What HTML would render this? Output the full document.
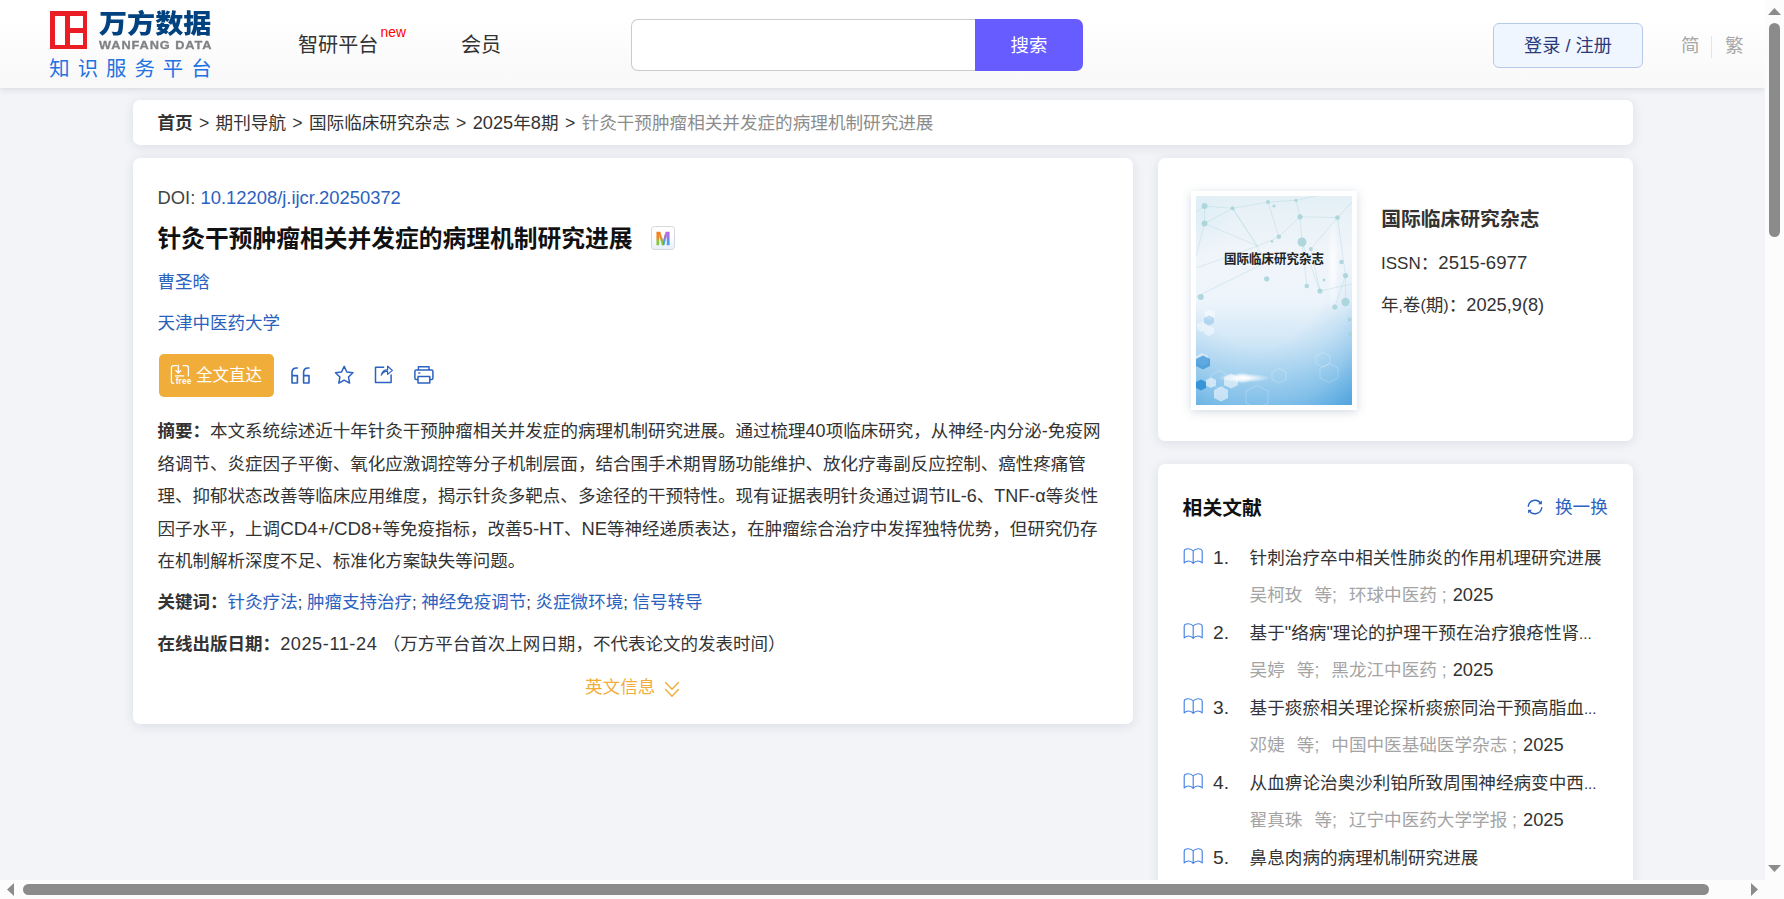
<!DOCTYPE html>
<html lang="zh-CN">
<head>
<meta charset="utf-8">
<title>针灸干预肿瘤相关并发症的病理机制研究进展</title>
<style>
*{box-sizing:border-box;margin:0;padding:0}
html,body{width:1784px;height:899px;overflow:hidden;background:#fcfcfc}
body{font-family:"Liberation Sans","Noto Sans CJK SC",sans-serif;color:#333;position:relative;-webkit-font-smoothing:antialiased}
a{text-decoration:none;color:inherit}
.l{font-size:18px;line-height:1}
#vp{position:absolute;left:0;top:0;width:1765px;height:880px;overflow:hidden;background:#f2f4f8}
/* header */
#hd{position:absolute;left:0;top:0;width:1765px;height:88px;background:linear-gradient(#ffffff 20%,#f8f8f8);box-shadow:0 1px 7px rgba(40,45,60,.15)}
.abs{position:absolute;white-space:nowrap}
#logo-sq{left:50px;top:11px;width:37px;height:38px;background:#ea1c24}
#logo-sq i{position:absolute;background:#fff;display:block}
#logo-cn{left:99px;top:4.2px;font-family:"Noto Sans CJK SC",sans-serif;font-weight:900;font-size:26px;line-height:36px;color:#00417f;transform:scaleX(1.08);transform-origin:0 0}
#logo-en{left:99px;top:38px;font-weight:700;font-size:11px;line-height:14px;color:#808285;letter-spacing:.8px;transform:scaleX(1.16);transform-origin:0 0;-webkit-text-stroke:.3px #808285}
#logo-sub{left:49.3px;top:54.8px;font-size:20.4px;line-height:28px;color:#2272e2;letter-spacing:8px}
.nav{font-size:20.1px;line-height:28px;color:#333;top:31px}
#new{left:380.6px;top:24.8px;font-size:13.8px;line-height:16px;color:#f00}
#sin{left:631px;top:19px;width:346px;height:52px;border:1px solid #cbcbcb;border-right:none;border-radius:7px 0 0 7px;background:#fff}
#sbtn{left:975px;top:19px;width:108px;height:52px;border-radius:0 7px 7px 0;background:#665cff;color:#fff;font-size:18.4px;line-height:53px;text-align:center}
#login{left:1493px;top:23px;width:150px;height:45px;border:1px solid #b6c9e8;border-radius:6px;background:#f0f6ff;color:#2b3a7a;font-size:18.2px;line-height:44px;text-align:center}
.lang{font-size:18.6px;line-height:28px;color:#a8a8a8;top:32px}
/* panels */
.panel{position:absolute;background:#fff;border-radius:7px;box-shadow:0 2px 12px rgba(20,25,40,.1)}
#bc .l{font-size:18.2px}
#bc{left:133px;top:100px;width:1500px;height:45px;font-size:17.6px;line-height:47.6px;padding-left:24.4px;white-space:nowrap;color:#333}
#bc b{font-weight:700}
#bc .cur{color:#8c8c8c}
#main{left:133px;top:158px;width:1000px;height:566px}
#jr{left:1158px;top:158px;width:475px;height:283px}
#rel{left:1158px;top:464px;width:475px;height:520px}
.blue{color:#2b62c0}
.sep{display:inline-block;width:23px;text-align:center}
#main .row{position:absolute;left:24.5px;white-space:nowrap;font-size:17.52px;line-height:28px}
#doi{top:26px}
#ttl{top:62.5px;font-size:23.76px!important;line-height:36px!important;font-weight:700;color:#111}
#au{top:110px}
#aff{top:151px}
#ftbtn{position:absolute;left:26px;top:196px;width:115px;height:43px;border-radius:5px;background:#f0ad3a;color:#fff;font-size:16.5px;line-height:43px;padding-left:37px;white-space:nowrap}
#abs{position:absolute;left:24.5px;top:257px;width:960px;font-size:17.52px;line-height:32.5px;white-space:nowrap;color:#333}
#abs b,#kw b,#od b{font-weight:700;color:#333}
#kw{top:430px}
#od{top:472px}
#en{position:absolute;left:452px;top:515px;font-size:17.6px;line-height:28px;color:#f0ad3a;white-space:nowrap}
#mico{position:absolute;left:518px;top:68px;width:24px;height:24px;border:1.5px solid #d4d7dc;border-radius:3.5px;background:linear-gradient(#fff 40%,#e9f0fa);text-align:center;font-weight:700;font-size:18px;line-height:24.5px}

#cov{position:absolute;left:33px;top:33px;width:166px;height:219px;background:#fff;box-shadow:0 2px 9px rgba(80,110,150,.25);padding:5px}
#cov svg{display:block}
#jt{position:absolute;left:223.2px;top:47px;font-size:19.8px;line-height:28px;font-weight:700;color:#333;white-space:nowrap}
.jl{position:absolute;left:223px;font-size:17.6px;line-height:28px;color:#333;white-space:nowrap}
#relh{position:absolute;left:24.6px;top:29.8px;font-size:19.8px;line-height:28px;font-weight:700;color:#111;white-space:nowrap}
#chg{position:absolute;left:397px;top:28.8px;font-size:17.6px;line-height:28px;color:#2b62c0;white-space:nowrap}
.it{position:absolute;left:0;width:475px;height:75px;font-size:17.6px;line-height:28px;white-space:nowrap}
.it svg{position:absolute;left:25px;top:4px}
.it .n{position:absolute;left:55px;top:0;font-size:19.2px;color:#333}
.it .t{position:absolute;left:91.6px;top:0;color:#333}
.it .m{position:absolute;left:91.6px;top:37px;color:#a4a4a4}
.it .m i{font-style:normal;color:#333;font-size:18.3px}
.it .m .g{display:inline-block;width:12px}
#mico span{font-weight:700;background:linear-gradient(#f58220 15%,#f08a24 45%,#8dc63f 60%,#7fc241) left/46% 100% no-repeat,linear-gradient(#b66ae2 20%,#8f7be6 45%,#46a0ea 65%,#3fa4e8) right/46% 100% no-repeat,linear-gradient(#e8604a 30%,#4aa79a 75%) center/20% 100% no-repeat;-webkit-background-clip:text;background-clip:text;color:transparent;-webkit-text-stroke:.4px rgba(120,150,120,.0)}

</style>
</head>
<body>
<div id="vp">

<div id="hd">
  <div class="abs" id="logo-sq"><i style="left:4.5px;top:5px;width:10.5px;height:28.5px"></i><i style="left:19.5px;top:5px;width:13.5px;height:12px"></i><i style="left:19.5px;top:21.5px;width:13.5px;height:12px"></i></div>
  <div class="abs" id="logo-cn">万方数据</div>
  <div class="abs" id="logo-en">WANFANG DATA</div>
  <div class="abs" id="logo-sub">知识服务平台</div>
  <div class="abs nav" style="left:298px">智研平台</div>
  <div class="abs" id="new">new</div>
  <div class="abs nav" style="left:461px">会员</div>
  <div class="abs" id="sin"></div>
  <div class="abs" id="sbtn">搜索</div>
  <div class="abs" id="login">登录 / 注册</div>
  <div class="abs lang" style="left:1681px">简</div>
  <div class="abs" style="left:1711px;top:36px;width:1px;height:22px;background:#e4e4e4"></div>
  <div class="abs lang" style="left:1725px">繁</div>
</div>

<div class="panel" id="bc"><b>首页</b><span class="sep">&gt;</span>期刊导航<span class="sep">&gt;</span>国际临床研究杂志<span class="sep">&gt;</span><span class="l">2025</span>年<span class="l">8</span>期<span class="sep">&gt;</span><span class="cur">针灸干预肿瘤相关并发症的病理机制研究进展</span></div>

<div class="panel" id="main">
  <div class="row" id="doi"><span class="l" style="color:#444;font-size:18.4px">DOI: </span><a class="blue l" style="font-size:18.4px">10.12208/j.ijcr.20250372</a></div>
  <div class="row" id="ttl">针灸干预肿瘤相关并发症的病理机制研究进展</div>
  <div id="mico"><span>M</span></div>
  <div class="row blue" id="au">曹圣晗</div>
  <div class="row blue" id="aff">天津中医药大学</div>
  <div id="ftbtn">全文直达</div>
  <svg class="abs" style="left:37px;top:206px" width="22" height="21" viewBox="0 0 22 21" fill="none" stroke="#fff" stroke-width="1.3" stroke-linecap="round" stroke-linejoin="round"><path d="M7.1 1.700H3.600Q1.400 1.700 1.400 3.900V17.200Q1.400 19.400 3.600 19.400H4.100M12.600 1.700H16.200Q18.400 1.700 18.400 3.900V12.600M8.300 .800V8.800M5.500 6.300L8.300 9.100L11.100 6.300M4.900 11.900H14.300" stroke-linecap="butt"/><text x="5.700" y="20.300" font-family="'Liberation Sans',sans-serif" font-size="8.2" font-weight="700" fill="#fff" stroke="none" letter-spacing=".2">free</text></svg>
  <svg class="abs" style="left:157px;top:208px" width="22" height="19" viewBox="0 0 22 19" fill="none" stroke="#2b62c0" stroke-width="1.6" stroke-linejoin="round" stroke-linecap="round"><path d="M7.4 2H6.6Q2 2 2 6.6V17H7.4V9.6H2M19 2H18.2Q13.6 2 13.6 6.6V17H19V9.6H13.6"/></svg>
  <svg class="abs" style="left:201px;top:207px" width="21" height="20" viewBox="0 0 21 20" fill="none" stroke="#2b62c0" stroke-width="1.5" stroke-linejoin="round"><path d="M10.2 1.4l2.65 5.6 6.05.8-4.4 4.25 1.1 6.05-5.4-2.95-5.4 2.95 1.1-6.05L1.5 7.8l6.05-.8z"/></svg>
  <svg class="abs" style="left:240px;top:206px" width="22" height="21" viewBox="0 0 22 21" fill="none" stroke="#2b62c0" stroke-width="1.5" stroke-linejoin="round" stroke-linecap="round"><path d="M10.6 3.2H2.5V18.4H18.1V11"/><path d="M8.2 11.2Q9.6 5.8 14.6 5.7V2.2L19.4 6.4L14.6 10.4V7.2Q10.6 7.2 8.2 11.2Z" stroke-width="1.2" fill="none"/></svg>
  <svg class="abs" style="left:280px;top:207px" width="22" height="20" viewBox="0 0 22 20" fill="none" stroke="#2b62c0" stroke-width="1.5" stroke-linejoin="round"><path d="M5.4 5V1.8H16V5M5 14.6H3.2Q1.9 14.6 1.9 13.3V6.3Q1.9 5 3.2 5H18.6Q19.9 5 19.9 6.3V13.3Q19.9 14.6 18.6 14.6H16.8M5 11.4H16.8V18H5Z"/><path d="M5.2 8H7.4" stroke-width="1.3"/></svg>

  <div id="abs"><b>摘要：</b>本文系统综述近十年针灸干预肿瘤相关并发症的病理机制研究进展。通过梳理<span class="l">40</span>项临床研究，从神经<span class="l">-</span>内分泌<span class="l">-</span>免疫网<br>络调节、炎症因子平衡、氧化应激调控等分子机制层面，结合围手术期胃肠功能维护、放化疗毒副反应控制、癌性疼痛管<br>理、抑郁状态改善等临床应用维度，揭示针灸多靶点、多途径的干预特性。现有证据表明针灸通过调节<span class="l">IL-6</span>、<span class="l">TNF-α</span>等炎性<br>因子水平，上调<span class="l" style="font-size:18.8px">CD4+/CD8+</span>等免疫指标，改善<span class="l" style="font-size:18.6px">5-HT</span>、<span class="l" style="font-size:18.4px">NE</span>等神经递质表达，在肿瘤综合治疗中发挥独特优势，但研究仍存<br>在机制解析深度不足、标准化方案缺失等问题。</div>
  <div class="row" id="kw"><b>关键词：</b><a class="blue">针灸疗法</a><span style="font-size:16.6px">; </span><a class="blue">肿瘤支持治疗</a><span style="font-size:16.6px">; </span><a class="blue">神经免疫调节</a><span style="font-size:16.6px">; </span><a class="blue">炎症微环境</a><span style="font-size:16.6px">; </span><a class="blue">信号转导</a></div>
  <div class="row" id="od"><b>在线出版日期：</b><span class="l" style="font-size:18.2px;letter-spacing:.55px">2025-11-24</span><span style="display:inline-block;width:5.4px"></span>（万方平台首次上网日期，不代表论文的发表时间）</div>
  <div id="en">英文信息<svg class="abs" style="left:78px;top:5.5px" width="18" height="18" viewBox="0 0 18 18" fill="none" stroke="#f0ad3a" stroke-width="1.4" stroke-linecap="round" stroke-linejoin="round"><path d="M2.6 3.4L9 10.2L15.4 3.4M2.6 10.4L9 17.2L15.4 10.4"/></svg></div>
</div>
<div class="panel" id="jr">
  <div id="cov"><svg width="156" height="209" viewBox="0 0 156 209">
<defs>
<linearGradient id="cg" x1="0" y1="0" x2="0" y2="1"><stop offset="0" stop-color="#e4f0f6"/><stop offset=".28" stop-color="#f0f5fa"/><stop offset=".5" stop-color="#edf4fb"/><stop offset=".68" stop-color="#d3e8f7"/><stop offset=".85" stop-color="#b3d9f2"/><stop offset="1" stop-color="#9bcdee"/></linearGradient>
<radialGradient id="cb" cx=".4" cy=".25" r=".95"><stop offset="0" stop-color="#3f9bdb" stop-opacity="0"/><stop offset=".5" stop-color="#3f9bdb" stop-opacity="0"/><stop offset=".66" stop-color="#4aa2de" stop-opacity=".14"/><stop offset=".8" stop-color="#4aa2de" stop-opacity=".34"/><stop offset="1" stop-color="#3f9bdb" stop-opacity=".8"/></radialGradient>
<linearGradient id="ct" x1="0" y1="0" x2="0" y2="1"><stop offset="0" stop-color="#000"/><stop offset=".3" stop-color="#000"/><stop offset=".62" stop-color="#fff"/><stop offset="1" stop-color="#fff"/></linearGradient>
<mask id="cm"><rect width="156" height="209" fill="url(#ct)"/></mask>
<radialGradient id="cf" cx=".5" cy=".5" r=".5"><stop offset="0" stop-color="#fff" stop-opacity="1"/><stop offset=".4" stop-color="#fff" stop-opacity=".7"/><stop offset="1" stop-color="#fff" stop-opacity="0"/></radialGradient>
<radialGradient id="cl" cx=".5" cy=".5" r=".5"><stop offset="0" stop-color="#cfe9f3" stop-opacity=".9"/><stop offset="1" stop-color="#cfe9f3" stop-opacity="0"/></radialGradient>
</defs>
<rect width="156" height="209" fill="url(#cg)"/>
<rect width="156" height="209" fill="url(#cb)" mask="url(#cm)"/>
<ellipse cx="0" cy="20" rx="40" ry="45" fill="url(#cl)" opacity=".35"/>
<ellipse cx="137" cy="70" rx="6" ry="50" fill="url(#cf)" opacity=".75"/>
<g stroke="#a4d0d8" stroke-width=".6" opacity=".55" fill="none">
<path d="M0 16L8.5 10L36.6 12.3L72 6L100 4.3L120 0M8.5 10L8.5 27.5L0 60M8.5 27.5L36.6 12.3L62 50L82.8 40.8L104 20.8L100 4.3M8.5 27.5L62 50L0 72M82.8 40.8L72 6M104 20.8L141.5 21.6L156 6M104 20.8L106 46L124 95M141.5 21.6L149.5 79.5L149.5 106M106 46L110.8 90M0 101L70.7 66L36.6 12.3M141.5 21.6L114.8 52.9L124 95L156 88M138.8 111L149.5 79.5"/>
</g>
<g fill="#a6d3da" opacity=".85">
<circle cx="8.5" cy="10" r="3"/><circle cx="8.5" cy="27.5" r="3"/><circle cx="36.6" cy="12.3" r="2"/><circle cx="72" cy="6" r="2"/><circle cx="78" cy="10" r="1.6"/><circle cx="100" cy="4.3" r="1.6"/><circle cx="104" cy="20.8" r="2.6"/><circle cx="141.5" cy="21.6" r="2.4"/><circle cx="82.8" cy="40.8" r="2.3"/><circle cx="106" cy="46" r="4.5"/><circle cx="114.8" cy="52.9" r="2"/><circle cx="76" cy="45.4" r="1.3"/><circle cx="70.7" cy="82.8" r="2.6"/><circle cx="110.8" cy="90" r="2.3"/><circle cx="124" cy="95" r="2.6"/><circle cx="128" cy="84" r="1.5"/><circle cx="149.5" cy="79.5" r="2.6"/><circle cx="149.5" cy="106" r="4.2"/><circle cx="138.8" cy="111" r="2.6"/><circle cx="4.8" cy="101" r="3"/><circle cx="145.5" cy="66" r="2.3"/><circle cx="153.5" cy="123.6" r="2"/><circle cx="154" cy="138" r="2"/>
</g>
<g fill="#fff" opacity=".55">
<path d="M9 116l5-2.6 5 2.6v5.4l-5 2.6-5-2.6zM1 128l5-2.6 5 2.6v5.4l-5 2.6-5-2.6zM8 132l5-2.6 5 2.6v5.4l-5 2.6-5-2.6zM0 160l6-3 6 3v7l-6 3-6-3z" opacity=".8"/>
<path d="M10 184l5-2.6 5 2.6v5.4l-5 2.6-5-2.6zM28 181l7-3.5 7 3.5v8l-7 3.5-7-3.5zM18 194l7-3.5 7 3.5v8l-7 3.5-7-3.5z"/>
</g>
<g fill="none" stroke="#fff" stroke-width=".8" opacity=".28"><path d="M15 179l8.500-4.5 8.500 4.500v9l-8.500 4.500-8.500-4.500zM76 176l7-3.500 7 3.500v7.500l-7 3.500-7-3.500zM50 195l11-5.500 11 5.500v12l-11 5.500-11-5.500zM120 160l7-3.500 7 3.500v7.500l-7 3.500-7-3.500zM124 172l9-4.500 9 4.500v10l-9 4.500-9-4.500z"/></g>
<g fill="#2f8fd6"><path d="M0 163l7-3.500 7 3.500v7l-7 3.500-7-3.500z" opacity=".7"/><path d="M0 186l5-2.500 5 2.500v6l-5 2.500-5-2.500z" opacity=".9"/><path d="M8 122l5-2.500 5 2.500v5l-5 2.500-5-2.500z" opacity=".25"/></g>
<ellipse cx="48" cy="182" rx="26" ry="4.500" fill="url(#cf)"/>
<ellipse cx="46" cy="182" rx="10" ry="6" fill="url(#cf)" opacity=".8"/>
<text x="78" y="66.800" text-anchor="middle" font-family="'Liberation Sans','Noto Sans CJK SC',sans-serif" font-weight="700" font-size="12.600" fill="#222" textLength="100" lengthAdjust="spacingAndGlyphs">国际临床研究杂志</text>
</svg></div>
  <div id="jt">国际临床研究杂志</div>
  <div class="jl" style="top:91px"><span style="font-size:17px">ISSN</span>：<span class="l" style="font-size:18.6px">2515-6977</span></div>
  <div class="jl" style="top:133px">年<span style="font-size:15px">,</span>卷<span style="font-size:16px">(</span>期<span style="font-size:16px">)</span>：<span class="l" style="font-size:18.2px">2025,9(8)</span></div>
</div>
<div class="panel" id="rel">
  <div id="relh">相关文献</div>
  <div id="chg"><svg class="abs" style="left:-29px;top:5.5px" width="18" height="18" viewBox="0 0 18 18" fill="none" stroke="#2b62c0" stroke-width="1.4" stroke-linecap="round"><path d="M2.3 8.2A6.8 6.8 0 0 1 14.6 5.2M15.7 9.8A6.8 6.8 0 0 1 3.4 12.8"/><path d="M15.9 2.4V6.2H12.1Z" fill="#2b62c0" stroke="none"/><path d="M2.1 15.6V11.8H5.9Z" fill="#2b62c0" stroke="none"/></svg>换一换</div>
  <div class="it" style="top:80px"><svg width="21" height="18" viewBox="0 0 21 18" fill="none" stroke="#4380e6" stroke-width="1.15" stroke-linejoin="round"><path d="M10.200 3C8.800 1.200 6.800.700 5.200.700 3 .700 1.200 1.600 1.200 3.400V15C2.400 13.600 4 13 5.600 13c1.800 0 3.400.800 4.600 2.400 1.200-1.600 2.800-2.400 4.600-2.400 1.600 0 3.200.600 4.400 2V3.400C19.200 1.600 17.400.700 15.200.700c-1.600 0-3.600.500-5 2.300zM10.200 3v12.400"/></svg><span class="n">1.</span><div class="t">针刺治疗卒中相关性肺炎的作用机理研究进展</div><div class="m">吴柯玫<span class="g"></span>等;<span class="g"></span>环球中医药 ;<span style="display:inline-block;width:6px"></span><i>2025</i></div></div>
  <div class="it" style="top:155px"><svg width="21" height="18" viewBox="0 0 21 18" fill="none" stroke="#4380e6" stroke-width="1.15" stroke-linejoin="round"><path d="M10.200 3C8.800 1.200 6.800.700 5.200.700 3 .700 1.200 1.600 1.200 3.400V15C2.400 13.600 4 13 5.600 13c1.800 0 3.400.800 4.600 2.400 1.200-1.600 2.800-2.400 4.600-2.400 1.600 0 3.200.600 4.400 2V3.400C19.200 1.600 17.400.700 15.200.700c-1.600 0-3.600.500-5 2.300zM10.200 3v12.400"/></svg><span class="n">2.</span><div class="t">基于<span class="l">&quot;</span>络病<span class="l">&quot;</span>理论的护理干预在治疗狼疮性肾<span style="font-size:15px">...</span></div><div class="m">吴婷<span class="g"></span>等;<span class="g"></span>黑龙江中医药 ;<span style="display:inline-block;width:6px"></span><i>2025</i></div></div>
  <div class="it" style="top:230px"><svg width="21" height="18" viewBox="0 0 21 18" fill="none" stroke="#4380e6" stroke-width="1.15" stroke-linejoin="round"><path d="M10.200 3C8.800 1.200 6.800.700 5.200.700 3 .700 1.200 1.600 1.200 3.400V15C2.400 13.600 4 13 5.600 13c1.800 0 3.400.800 4.600 2.400 1.200-1.600 2.800-2.400 4.600-2.400 1.600 0 3.200.600 4.400 2V3.400C19.200 1.600 17.400.700 15.200.700c-1.600 0-3.600.500-5 2.300zM10.200 3v12.400"/></svg><span class="n">3.</span><div class="t">基于痰瘀相关理论探析痰瘀同治干预高脂血<span style="font-size:15px">...</span></div><div class="m">邓婕<span class="g"></span>等;<span class="g"></span>中国中医基础医学杂志 ;<span style="display:inline-block;width:6px"></span><i>2025</i></div></div>
  <div class="it" style="top:305px"><svg width="21" height="18" viewBox="0 0 21 18" fill="none" stroke="#4380e6" stroke-width="1.15" stroke-linejoin="round"><path d="M10.200 3C8.800 1.200 6.800.700 5.200.700 3 .700 1.200 1.600 1.200 3.400V15C2.400 13.600 4 13 5.600 13c1.800 0 3.400.800 4.600 2.400 1.200-1.600 2.800-2.400 4.600-2.400 1.600 0 3.200.600 4.400 2V3.400C19.200 1.600 17.400.700 15.200.700c-1.600 0-3.600.500-5 2.300zM10.200 3v12.400"/></svg><span class="n">4.</span><div class="t">从血痹论治奥沙利铂所致周围神经病变中西<span style="font-size:15px">...</span></div><div class="m">翟真珠<span class="g"></span>等;<span class="g"></span>辽宁中医药大学学报 ;<span style="display:inline-block;width:6px"></span><i>2025</i></div></div>
  <div class="it" style="top:380px"><svg width="21" height="18" viewBox="0 0 21 18" fill="none" stroke="#4380e6" stroke-width="1.15" stroke-linejoin="round"><path d="M10.200 3C8.800 1.200 6.800.700 5.200.700 3 .700 1.200 1.600 1.200 3.400V15C2.400 13.600 4 13 5.600 13c1.800 0 3.400.800 4.600 2.400 1.200-1.600 2.800-2.400 4.600-2.400 1.600 0 3.200.600 4.400 2V3.400C19.200 1.600 17.400.700 15.200.700c-1.600 0-3.600.500-5 2.300zM10.200 3v12.400"/></svg><span class="n">5.</span><div class="t">鼻息肉病的病理机制研究进展</div></div>
</div>

</div>

<!-- fake scrollbars -->
<svg class="abs" style="left:0;top:0" width="1784" height="899" viewBox="0 0 1784 899">
  <g fill="#8b8b8b">
    <rect x="1769" y="23" width="11" height="214" rx="5.5"/>
    <path d="M1774.5 8 L1781 15 L1768 15Z"/>
    <path d="M1768 865 L1781 865 L1774.5 872Z"/>
    <rect x="23" y="884" width="1686" height="11" rx="5.5"/>
    <path d="M7 889.5 L14 883 L14 896Z"/>
    <path d="M1758 889.5 L1751 883 L1751 896Z"/>
  </g>
</svg>
</body>
</html>
